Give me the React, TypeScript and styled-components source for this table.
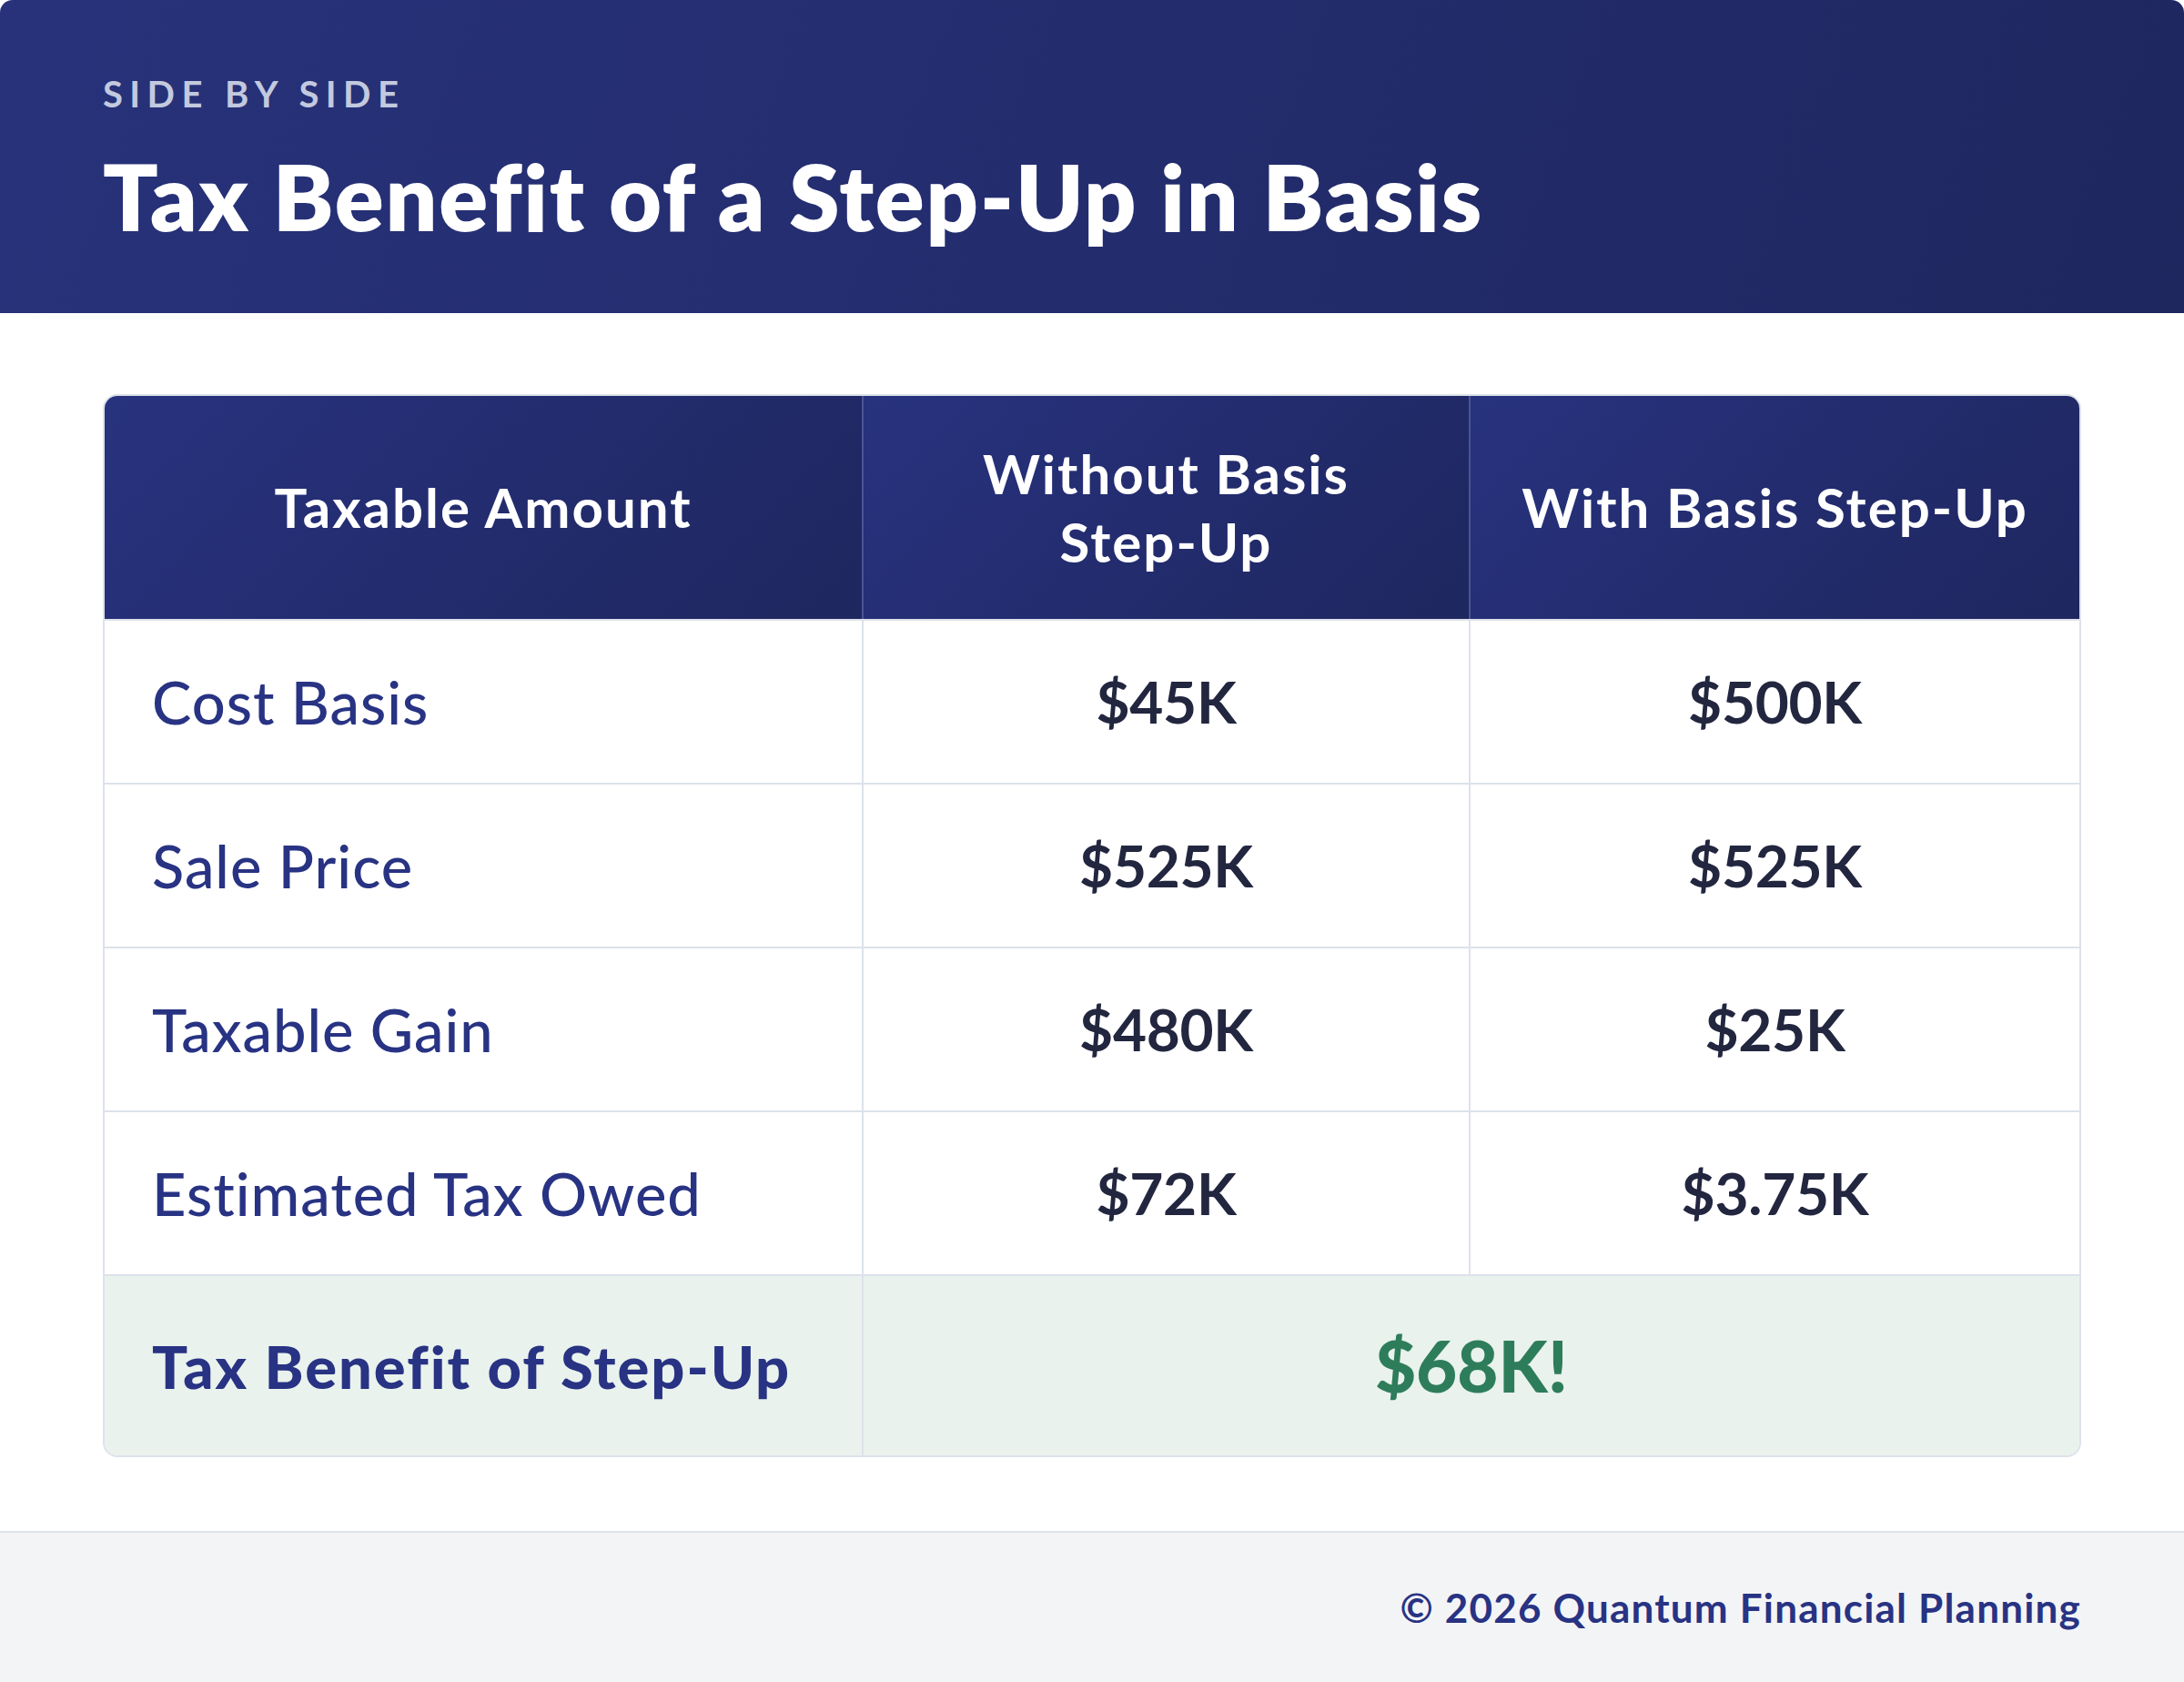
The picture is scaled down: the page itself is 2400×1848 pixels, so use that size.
import React from "react";
import styled, { createGlobalStyle } from "styled-components";

const GlobalStyle = createGlobalStyle`
  html, body {
    margin: 0;
    padding: 0;
    background: #ffffff;
  }
  * { box-sizing: border-box; }
  body {
    font-family: Lato, "Noto Sans", "Open Sans", sans-serif;
  }
`;

const Page = styled.div`
  width: 100%;
  min-height: 100vh;
  display: flex;
  flex-direction: column;
  background: #ffffff;
`;

const Hero = styled.header`
  height: 344px;
  padding: 79px 113px 0;
  display: flex;
  flex-direction: column;
  gap: 28px;
  border-radius: 14px 14px 0 0;
  background: linear-gradient(110deg, #27327a 0%, #232c6c 55%, #1f275f 100%);
`;

const Eyebrow = styled.div`
  font-size: 40px;
  line-height: 1.2;
  font-weight: 700;
  letter-spacing: 0.185em;
  color: #c3c9de;
  text-transform: uppercase;
`;

const Title = styled.h1`
  margin: 0;
  font-size: 100px;
  line-height: 1.2;
  font-weight: 800;
  letter-spacing: 1.8px;
  color: #ffffff;
`;

const Main = styled.main`
  flex: 1;
  padding: 89px 113px 81px;
`;

const Table = styled.div`
  display: grid;
  grid-template-columns: 834px 667px 1fr;
  border: 2px solid #dde2ea;
  border-radius: 16px;
  overflow: hidden;
`;

const HeadCell = styled.div<{ $last?: boolean }>`
  height: 245px;
  display: flex;
  align-items: center;
  justify-content: center;
  text-align: center;
  padding: 0 30px;
  font-size: 60px;
  line-height: 75px;
  font-weight: 700;
  letter-spacing: 2px;
  color: #ffffff;
  background: linear-gradient(135deg, #28337f 0%, #232c6e 50%, #1f275f 100%);
  border-right: ${(p) => (p.$last ? "none" : "2px solid #4a5496")};
`;

const Cell = styled.div<{ $last?: boolean; $height: number; $total?: boolean; $span?: number }>`
  height: ${(p) => p.$height}px;
  display: flex;
  align-items: center;
  border-top: 2px solid #dde2ea;
  border-right: ${(p) => (p.$last ? "none" : "2px solid #dde2ea")};
  background: ${(p) => (p.$total ? "#e9f2ed" : "#ffffff")};
  grid-column: ${(p) => (p.$span ? `span ${p.$span}` : "auto")};
`;

const LabelCell = styled(Cell)`
  padding-left: 52px;
`;

const ValueCell = styled(Cell)`
  justify-content: center;
`;

const Label = styled.span<{ $strong?: boolean }>`
  font-size: 65px;
  line-height: 1.2;
  font-weight: ${(p) => (p.$strong ? 900 : 500)};
  letter-spacing: ${(p) => (p.$strong ? "2px" : "1px")};
  color: #283383;
`;

const Value = styled.span`
  font-size: 64px;
  line-height: 1.2;
  font-weight: 700;
  letter-spacing: -0.3px;
  color: #22263f;
`;

const Highlight = styled.span`
  font-size: 78px;
  line-height: 1.2;
  font-weight: 900;
  color: #2e7d5a;
`;

const Footer = styled.footer`
  height: 166px;
  border-top: 2px solid #dde3ea;
  background: #f3f4f6;
  display: flex;
  align-items: center;
  justify-content: flex-end;
  padding: 0 113px;
`;

const Copyright = styled.span`
  font-size: 44px;
  line-height: 1.2;
  font-weight: 700;
  letter-spacing: 1.2px;
  color: #283383;
`;

const rows = [
  { label: "Cost Basis", without: "$45K", with: "$500K" },
  { label: "Sale Price", without: "$525K", with: "$525K" },
  { label: "Taxable Gain", without: "$480K", with: "$25K" },
  { label: "Estimated Tax Owed", without: "$72K", with: "$3.75K" },
];

export default function App() {
  return (
    <>
      <GlobalStyle />
      <Page>
        <Hero>
          <Eyebrow>Side by Side</Eyebrow>
          <Title>Tax Benefit of a Step-Up in Basis</Title>
        </Hero>
        <Main>
          <Table>
            <HeadCell>Taxable Amount</HeadCell>
            <HeadCell>
              Without Basis
              <br />
              Step-Up
            </HeadCell>
            <HeadCell $last>With Basis Step-Up</HeadCell>
            {rows.map((r) => (
              <React.Fragment key={r.label}>
                <LabelCell $height={180}>
                  <Label>{r.label}</Label>
                </LabelCell>
                <ValueCell $height={180}>
                  <Value>{r.without}</Value>
                </ValueCell>
                <ValueCell $height={180} $last>
                  <Value>{r.with}</Value>
                </ValueCell>
              </React.Fragment>
            ))}
            <LabelCell $height={199} $total>
              <Label $strong>Tax Benefit of Step-Up</Label>
            </LabelCell>
            <ValueCell $height={199} $total $last $span={2}>
              <Highlight>$68K!</Highlight>
            </ValueCell>
          </Table>
        </Main>
        <Footer>
          <Copyright>© 2026 Quantum Financial Planning</Copyright>
        </Footer>
      </Page>
    </>
  );
}
